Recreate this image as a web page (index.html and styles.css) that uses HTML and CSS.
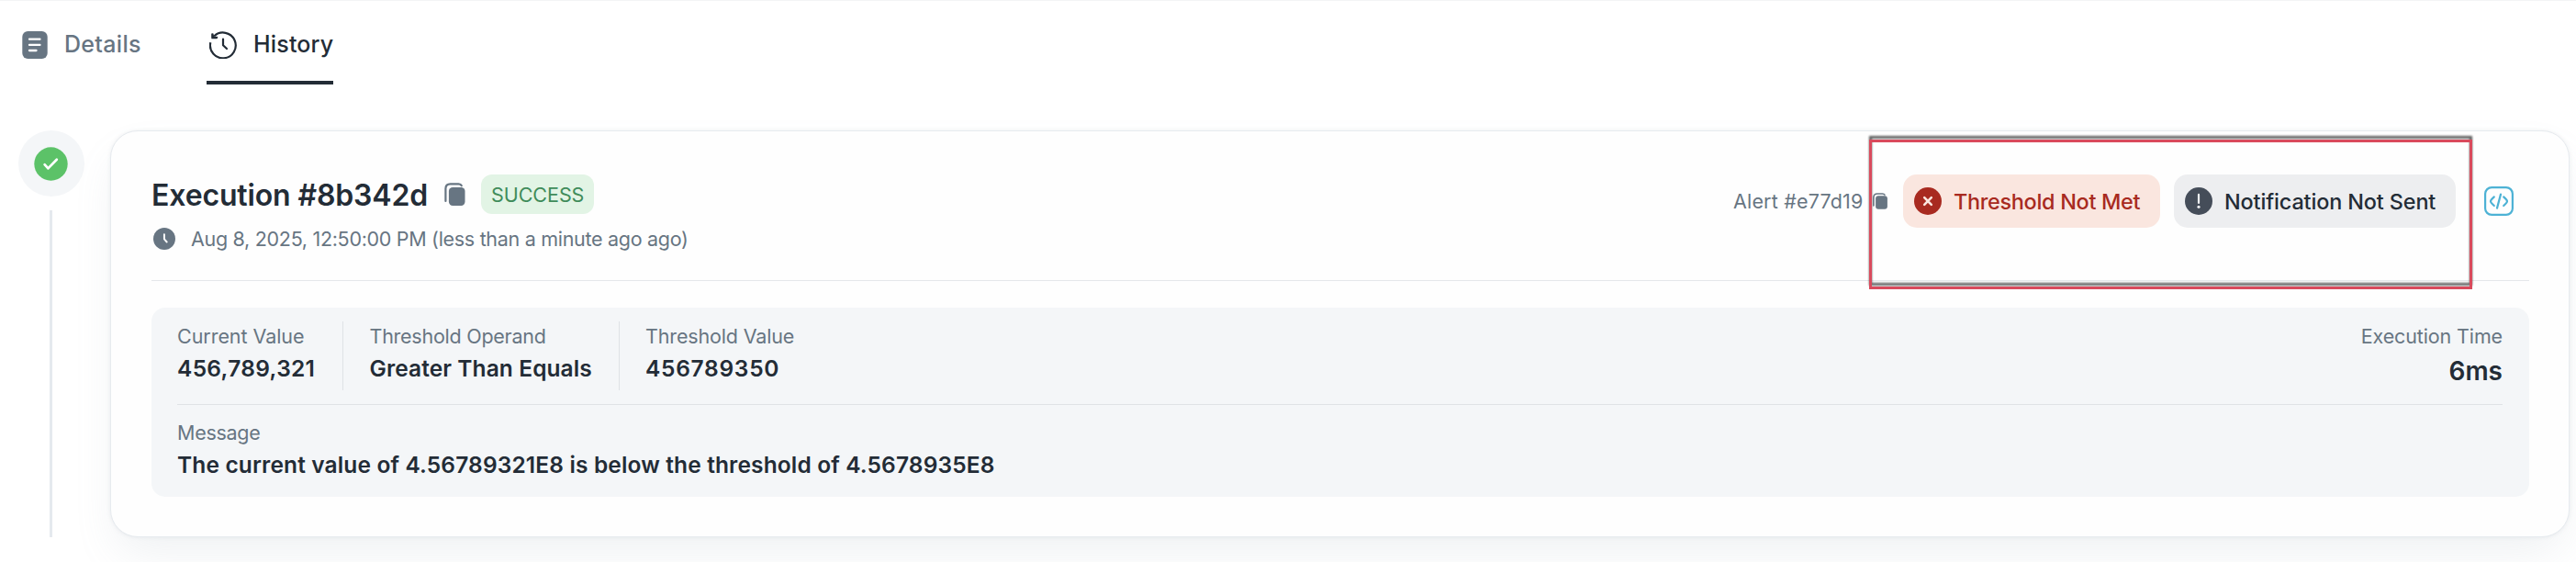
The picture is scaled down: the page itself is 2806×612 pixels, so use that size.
FILE: index.html
```html
<!DOCTYPE html>
<html lang="en">
<head>
<meta charset="utf-8">
<title>History</title>
<link rel="stylesheet" href="styles.css">
</head>
<body>
<nav class="tabs">
  <a class="tab tab-details">
    <svg class="tab-icon" width="28" height="30" viewBox="0 0 28 30"><rect x=".3" width="27.4" height="30" rx="6" fill="#677582"/><path d="M8 8.7h11.5M8 14.9h11.5M8 21h7.5" stroke="#fff" stroke-width="2.3" stroke-linecap="round"/></svg>
    <span class="tab-label details-label">Details</span>
  </a>
  <a class="tab tab-history active">
    <svg class="tab-icon" width="30" height="30" viewBox="0 0 30 30" fill="none" stroke="#232c36" stroke-width="2.2"><path d="M1.3 12.2A13.9 13.9 0 1 0 5.4 5.2"/><path d="M2.4 2.2v6h6.1z" fill="#232c36" stroke="none"/><path d="M3.6 3.4v3.4h4.6" stroke-linejoin="round" stroke-linecap="round"/><path d="M15 8.6V15.2L19 19" stroke-linecap="round" stroke-linejoin="round"/></svg>
    <span class="tab-label history-label">History</span>
  </a>
</nav>
<main class="timeline">
  <div class="rail">
    <div class="dot">
      <svg width="37" height="37" viewBox="0 0 37 37"><circle cx="18.5" cy="18.5" r="18.2" fill="#5cc268"/><path d="M11.6 19.2l3.8 4.2 9.4-9.6" fill="none" stroke="#fff" stroke-width="2.7" stroke-linecap="round" stroke-linejoin="round"/></svg>
    </div>
    <div class="line"></div>
  </div>
  <section class="card">
    <header class="head">
      <div class="summary">
        <div class="title-row">
          <h1 class="title">Execution #8b342d</h1>
          <svg class="copy" width="23" height="25" viewBox="0 0 23 25"><path d="M1.4 20V6.6Q1.4 1.3 6.6 1.3H15.5Q18 1.3 18.8 3.2" fill="none" stroke="#677582" stroke-width="2.2" stroke-linecap="round"/><rect x="4.9" y="4.9" width="17.6" height="20" rx="4.2" fill="#677582"/></svg>
          <span class="badge">SUCCESS</span>
        </div>
        <div class="time-row">
          <svg width="24" height="24" viewBox="0 0 24 24"><circle cx="12" cy="12" r="12" fill="#677582"/><path d="M11.9 7.1v5.3l2.8 3.1" fill="none" stroke="#fff" stroke-width="1.9" stroke-linecap="round" stroke-linejoin="round"/></svg>
          <span class="time">Aug 8, 2025, 12:50:00 PM (less than a minute ago ago)</span>
        </div>
      </div>
      <div class="status">
        <span class="alert">Alert #e77d19</span>
        <svg class="copy-small" width="16" height="18" viewBox="0 0 16 18"><path d="M.9 14V5Q.9 1 5 1H10.5Q12.4 1 13 2.1" fill="none" stroke="#677582" stroke-width="1.6" stroke-linecap="round"/><rect x="3.1" y="3.2" width="12.8" height="14.6" rx="3" fill="#677582"/></svg>
        <div class="chip chip-error">
          <svg width="30" height="30" viewBox="0 0 30 30"><circle cx="15" cy="15" r="15" fill="#a82a20"/><path d="M11.2 11.2l7.6 7.6M18.8 11.2l-7.6 7.6" stroke="#fae6df" stroke-width="2.6" stroke-linecap="round"/></svg>
          <span class="chip-text met">Threshold Not Met</span>
        </div>
        <div class="chip chip-muted">
          <svg width="30" height="30" viewBox="0 0 30 30"><circle cx="15" cy="15" r="15" fill="#454d59"/><path d="M15 7.9v9" stroke="#edeef0" stroke-width="2.2" stroke-linecap="round"/><circle cx="15" cy="21.3" r="1.6" fill="#edeef0"/></svg>
          <span class="chip-text sent">Notification Not Sent</span>
        </div>
        <svg class="code" width="32" height="32" viewBox="0 0 32 32" fill="none" stroke="#4db2d5" stroke-width="2.2" stroke-linecap="round" stroke-linejoin="round"><rect x="1.1" y="1.1" width="29.8" height="29.8" rx="7"/><path d="M10.8 11.4Q7 14.8 7 16.2T10.8 21M21.2 11.4Q25 14.8 25 16.2T21.2 21M18 8.6L14 23.6"/></svg>
      </div>
    </header>
    <div class="panel">
      <div class="stats">
        <div class="stat stat-current">
          <div class="label current-label">Current Value</div>
          <div class="value current-value">456,789,321</div>
        </div>
        <div class="stat stat-operand">
          <div class="label operand-label">Threshold Operand</div>
          <div class="value operand-value">Greater Than Equals</div>
        </div>
        <div class="stat stat-threshold">
          <div class="label threshold-label">Threshold Value</div>
          <div class="value threshold-value">456789350</div>
        </div>
        <div class="stat stat-duration">
          <div class="label duration-label">Execution Time</div>
          <div class="value duration-value">6ms</div>
        </div>
      </div>
      <div class="message">
        <div class="label message-label">Message</div>
        <div class="value message-value">The current value of 4.56789321E8 is below the threshold of 4.5678935E8</div>
      </div>
    </div>
    <div class="highlight"></div>
  </section>
</main>
</body>
</html>
```
FILE: styles.css
```css
* {
  box-sizing: border-box;
}

body {
  margin: 0;
  height: 612px;
  overflow: hidden;
  background: #fff;
  color: #232c36;
  font-family: Inter, "Liberation Sans", sans-serif;
  white-space: nowrap;
}

svg {
  display: block;
  flex: none;
}

.tabs {
  display: flex;
  gap: 72px;
  height: 92px;
  padding-left: 24px;
  border-top: 1px solid #f3f4f5;
}

.tab {
  display: flex;
  align-items: center;
  padding-top: 9px;
  border-bottom: 4px solid transparent;
  color: #677582;
  font-size: 25px;
  font-weight: 500;
  line-height: 30px;
}

.tab-label {
  padding-bottom: 2px;
}

.tab-details {
  width: 129px;
  gap: 18px;
}

.tab-history {
  width: 138px;
  padding-left: 3px;
  gap: 18px;
}

.active {
  color: #232c36;
  border-bottom-color: #232c36;
}

.details-label {
  letter-spacing: 0.32px;
}

.history-label {
  letter-spacing: 0.17px;
}

.timeline {
  display: flex;
  gap: 28px;
  height: 443px;
  margin-top: 50px;
  padding: 0 7px 0 20px;
}

.rail {
  display: flex;
  flex-direction: column;
  align-items: center;
  gap: 15px;
  width: 72px;
}

.dot {
  display: flex;
  align-items: center;
  justify-content: center;
  width: 72px;
  height: 72px;
  padding-right: 1px;
  border-radius: 50%;
  background: #f4f6f8;
}

.line {
  flex: 1;
  width: 3px;
  margin-right: 1px;
  background: #e5e9ee;
}

.card {
  position: relative;
  flex: 1;
  padding: 47px 43px 43px 44px;
  border: 1px solid #e7ebef;
  border-radius: 30px;
  background: #fefefe;
  box-shadow: 0 0 4px rgba(145, 158, 171, 0.16), 0 24px 48px -8px rgba(145, 158, 171, 0.14);
}

.head {
  display: flex;
  justify-content: space-between;
  height: 116px;
  border-bottom: 1px solid #e5e7ea;
}

.title-row {
  display: flex;
  align-items: center;
  height: 43px;
}

.title {
  width: 319px;
  margin: 0;
  padding-top: 3px;
  font-size: 32px;
  font-weight: 600;
  line-height: 42px;
  letter-spacing: -0.14px;
}

.copy {
  margin-right: 17px;
}

.badge {
  width: 123px;
  padding-left: 11px;
  border-radius: 12px;
  background: #e2f4e5;
  color: #3f8c5a;
  font-size: 21.5px;
  line-height: 44px;
  height: 43px;
  letter-spacing: -0.05px;
}

.time-row {
  display: flex;
  align-items: center;
  gap: 17px;
  margin-top: 15px;
  margin-left: 2px;
  height: 24px;
}

.time {
  color: #677582;
  font-size: 21.5px;
  line-height: 24px;
  letter-spacing: -0.3px;
}

.status {
  display: flex;
  align-items: center;
  height: 58px;
  padding-right: 17px;
}

.alert {
  width: 152px;
  color: #677582;
  font-size: 21.5px;
  letter-spacing: 0.18px;
}

.copy-small {
  margin-right: 17px;
}

.chip {
  display: flex;
  align-items: center;
  height: 58px;
  padding-left: 12px;
  border-radius: 15px;
  font-size: 23.4px;
  font-weight: 500;
}

.chip-error {
  width: 280px;
  gap: 13px;
  margin-right: 15px;
  background: #fae6df;
  color: #a82a20;
}

.chip-muted {
  width: 307px;
  gap: 13px;
  margin-right: 31px;
  background: #edeef0;
}

.met {
  letter-spacing: -0.29px;
}

.sent {
  letter-spacing: -0.12px;
}

.panel {
  height: 206px;
  margin-top: 29px;
  padding: 15px 29px 0 28px;
  border-radius: 15px;
  background: #f4f6f8;
}

.stats {
  display: flex;
  height: 75px;
}

.stat {
  padding-top: 2px;
}

.stat-current {
  width: 181px;
  border-right: 1px solid #dfe2e6;
}

.stat-operand {
  width: 301px;
  padding-left: 28.5px;
  border-right: 1px solid #dfe2e6;
}

.stat-threshold {
  padding-left: 28px;
}

.stat-duration {
  margin-left: auto;
  text-align: right;
}

.label {
  color: #677582;
  font-size: 21.5px;
  line-height: 28px;
}

.value {
  margin-top: 1px;
  font-size: 24.5px;
  font-weight: 600;
  line-height: 40px;
}

.current-label {
  letter-spacing: -0.05px;
}

.current-value {
  letter-spacing: 0.32px;
}

.operand-label {
  letter-spacing: -0.25px;
}

.operand-value {
  letter-spacing: 0.09px;
}

.threshold-label {
  letter-spacing: -0.15px;
}

.threshold-value {
  letter-spacing: 0.72px;
}

.duration-label {
  letter-spacing: -0.13px;
}

.duration-value {
  font-size: 28px;
  line-height: 46px;
}

.message {
  margin-top: 15px;
  padding-top: 16px;
  border-top: 1px solid #dfe2e6;
}

.message-label {
  letter-spacing: -0.28px;
}

.message-value {
  letter-spacing: 0.14px;
}

/* Callout frame drawn over the status chips */
.highlight {
  position: absolute;
  top: 9px;
  left: 1915px;
  width: 657px;
  height: 163px;
  border: 3px solid #d94a5c;
  filter: drop-shadow(0 -4px 0.8px rgba(0, 0, 0, 0.62));
}
```
